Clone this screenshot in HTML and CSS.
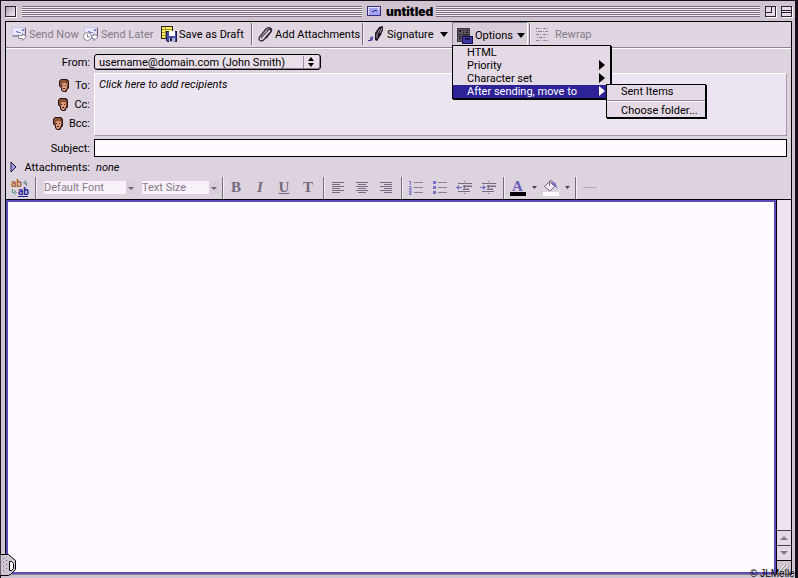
FILE: index.html
```html
<!DOCTYPE html>
<html lang="en">
<head>
    <meta charset="UTF-8">
    <meta name="viewport" content="width=device-width, initial-scale=1.0">
    <title>untitled</title>
    <link rel="stylesheet" href="styles.css">
</head>
<body>
    <!-- shapes used more than once -->
    <svg class="defs" width="0" height="0" aria-hidden="true">
        <symbol id="face" viewBox="0 0 10 13">
            <path d="M2 0h6l2 2v7l-2 2v1l-1 1H4l-2-2V9L0 7V2z" fill="#2c1418"/>
            <path d="M2 4h5l1 1v4l-2 3H4L3 10z" fill="#dc9c7c"/>
            <path d="M1 2l1-1h5l2 2v5H8V4H4L3 5v2H1z" fill="#8a5434"/>
            <path d="M3 6h1v1H3zM6 6h1v1H6zM4 9h2v1H4z" fill="#4a2020"/>
        </symbol>
        <symbol id="envelope" viewBox="0 0 14 10">
            <path d="M0 0h13v9H0z" fill="#e9e6ff" stroke="#b4aecb"/>
            <path d="M1 9h12.500V1" fill="none" stroke="#6c6688"/>
            <path d="M4 4h2v1h3v1H5V5H4zM10 2h2v2h-2z" fill="#8580d0"/>
        </symbol>
        <symbol id="lines" viewBox="0 0 14 12">
            <path d="M5 1.500h9M5 6.500h9M5 11.500h9" stroke="#8d8295"/>
        </symbol>
        <symbol id="indent" viewBox="0 0 16 14">
            <path d="M2 2.500h14M7 5h9M7 8h6M2 10.500h12" stroke="#756a7e"/>
            <path d="M7 5.500h9M7 8.500h6" stroke="#756a7e"/>
            <path d="M8.500 0v14" stroke="#756a7e" stroke-dasharray="1 1"/>
        </symbol>
    </svg>

    <div class="window">
        <header class="titlebar">
            <button class="box close" aria-label="Close"></button>
            <span class="stripes left"></span>
            <svg class="title-icon" width="14" height="10" viewBox="0 0 14 10">
                <path d="M0 0h14v10H0z" fill="#34307c"/>
                <path d="M1 1h12v8H1z" fill="#a3a1f5"/>
                <path d="M1 1h12v1H2v7H1z" fill="#e4e2ff"/>
                <path d="M5 5h2v1H5zM7 4h3v1H7z" fill="#34307c"/>
                <path d="M11 2h1v2h-1z" fill="#fff"/>
            </svg>
            <h1>untitled</h1>
            <span class="stripes right"></span>
            <button class="box zoom" aria-label="Zoom"></button>
            <button class="box shade" aria-label="Collapse"></button>
        </header>

        <main class="content">
            <div class="toolbar">
                <button class="tool send" disabled>
                    <svg width="16" height="16" viewBox="0 0 16 16">
                        <use href="#envelope" x="1" y="1" width="14" height="10"/>
                        <path d="M7.500 9.500h4v-2l4 3.500-4 3.500v-2h-4z" fill="#fff" stroke="#8d8295"/>
                    </svg>
                    Send Now
                </button>
                <button class="tool later" disabled>
                    <svg width="16" height="16" viewBox="0 0 16 16">
                        <use href="#envelope" x="1" y="1" width="14" height="10"/>
                        <path d="M9 9.500h2v-2l4 3.500-4 3.500v-2H9z" fill="#fff" stroke="#8d8295"/>
                        <circle cx="4.500" cy="10.500" r="4" fill="#fff" stroke="#8d8295"/>
                        <path d="M4.500 8v3H7" fill="none" stroke="#8d8295"/>
                    </svg>
                    Send Later
                </button>
                <button class="tool save">
                    <svg width="16" height="16" viewBox="0 0 16 16" shape-rendering="crispEdges">
                        <path d="M0 0h12v13H0z" fill="#2a2218"/>
                        <path d="M1 1h10v11H1z" fill="#fff15c"/>
                        <path d="M1 3h10v1H1zM1 6h10v1H1zM1 9h10v1H1zM4 1h1v11H4z" fill="#a8983c"/>
                        <path d="M5 5h11v11H6l-1-1z" fill="#1c1a48"/>
                        <path d="M6 6h9v9H6z" fill="#4a50a8"/>
                        <path d="M8 5h6v5H8z" fill="#fff"/>
                        <path d="M8 12h6v4H8z" fill="#b8b4cc"/>
                        <path d="M9 12h2v3H9z" fill="#1c1a48"/>
                    </svg>
                    Save as Draft
                </button>
                <span class="rule"></span>
                <button class="tool attach">
                    <svg width="16" height="16" viewBox="0 0 16 16">
                        <path d="M4 12l7-8c2-2 4 0 2.500 2L7 13.500c-2.500 3-6.500.5-4.500-2.500l6.500-8c2.500-3 7.500-.5 5 3L9 12.500" fill="none" stroke="#2c242c" stroke-width="1.200"/>
                        <path d="M4.500 11.500L10 5" stroke="#877c8c"/>
                    </svg>
                    Add Attachments
                </button>
                <span class="rule"></span>
                <button class="tool sign">
                    <svg width="17" height="16" viewBox="0 0 17 16">
                        <path d="M15 0l-4 1-4 6v7l2 1 4-6 2-5z" fill="#1c161c"/>
                        <path d="M12 3L9 8v4M14 2l-2 5" fill="none" stroke="#a59aa8"/>
                        <path d="M0 14.500h3l2-3-2-.5-.5 2.500 2.500.5" fill="none" stroke="#35309c"/>
                    </svg>
                    Signature
                    <svg class="caret" width="8" height="5" viewBox="0 0 8 5"><path d="M0 0h8L4 5z"/></svg>
                </button>
                <div class="options">
                    <button class="tool pressed" aria-haspopup="menu" aria-expanded="true">
                        <svg width="16" height="16" viewBox="0 0 16 16" shape-rendering="crispEdges">
                            <path d="M0 0h13v14H0z" fill="#3a343c"/>
                            <path d="M1 1h11v5H1zM1 7h5v6H1z" fill="#5c5460"/>
                            <path d="M2 2h2v2H2zM6 2h1v1H6zM9 2h2v1H9zM6 4h1v1H6zM9 4h2v1H9zM2 8h2v1H2zM2 10h2v1H2z" fill="#1c181c"/>
                            <path d="M5 8h11v8H5z" fill="#16124c"/>
                            <path d="M6 9h9v6H6z" fill="#3c38a0"/>
                            <path d="M8 10h5v2H8z" fill="#16124c"/>
                        </svg>
                        Options
                        <svg class="caret" width="8" height="5" viewBox="0 0 8 5"><path d="M0 0h8L4 5z"/></svg>
                    </button>
                    <div class="menu" role="menu">
                        <button role="menuitem">HTML</button>
                        <button role="menuitem" class="more">Priority</button>
                        <button role="menuitem" class="more">Character set</button>
                        <button role="menuitem" class="more selected">After sending, move to</button>
                        <div class="menu submenu" role="menu">
                            <button role="menuitem">Sent Items</button>
                            <hr>
                            <button role="menuitem">Choose folder...</button>
                        </div>
                    </div>
                </div>
                <span class="rule"></span>
                <button class="tool rewrap" disabled>
                    <svg width="14" height="14" viewBox="0 0 14 14">
                        <path d="M0 1.500h14M0 7.500h14M0 13.500h12" stroke="#8d8295" stroke-dasharray="3 1 1 2"/>
                        <path d="M0 4.500h12M1 10.500h9" stroke="#8d8295" stroke-dasharray="1 1 4 1"/>
                    </svg>
                    Rewrap
                </button>
            </div>

            <div class="headers">
                <label for="from">From:</label>
                <div class="popup">
                    <select id="from">
                        <option>username@domain.com (John Smith)</option>
                    </select>
                    <svg class="updown" width="16" height="12" viewBox="0 0 16 12">
                        <path d="M.5 0v12" stroke="#9c91a0"/>
                        <path d="M5 5l3-4 3 4zM5 7l3 4 3-4z"/>
                    </svg>
                </div>

                <div class="who">
                    <label for="recipients"><svg width="10" height="13"><use href="#face"/></svg>To:</label>
                    <label for="recipients"><svg width="10" height="13"><use href="#face"/></svg>Cc:</label>
                    <label for="recipients"><svg width="10" height="13"><use href="#face"/></svg>Bcc:</label>
                </div>
                <textarea id="recipients" placeholder="Click here to add recipients"></textarea>

                <label for="subject">Subject:</label>
                <input type="text" id="subject">
            </div>

            <div class="attachments">
                <svg width="8" height="12" viewBox="0 0 8 12"><path d="M1 1l5 5-5 5z" fill="#a5a0ec" stroke="#1c1840"/></svg>
                <span>Attachments:</span>
                <em>none</em>
            </div>

            <div class="format">
                <button class="swap" aria-label="Change case">
                    <svg width="18" height="18" viewBox="0 0 18 18">
                        <text x="0" y="8" class="ab warm">ab</text>
                        <text x="7" y="16" class="ab cool">ab</text>
                        <path d="M7 17.500h10" stroke="#221c94"/>
                        <path d="M15.500 7V3.500h-2M15 1.500l-2.500 2L15 5.500" fill="none" stroke="#6c88a0"/>
                        <path d="M1.500 10v3.500h2M3 11.500l2.500 2-2.500 2" fill="none" stroke="#4c9078"/>
                    </svg>
                </button>
                <span class="rule"></span>
                <div class="combo font">
                    <select aria-label="Font" disabled><option>Default Font</option></select>
                    <svg width="10" height="13" viewBox="0 0 10 13"><path d="M2 6h6L5 9z" fill="#6f6478"/></svg>
                </div>
                <div class="combo size">
                    <select aria-label="Text size" disabled><option>Text Size</option></select>
                    <svg width="10" height="13" viewBox="0 0 10 13"><path d="M2 6h6L5 9z" fill="#6f6478"/></svg>
                </div>
                <span class="rule"></span>
                <button class="letter bold" disabled>B</button>
                <button class="letter italic" disabled>I</button>
                <button class="letter under" disabled>U</button>
                <button class="letter" disabled>T</button>
                <span class="rule group"></span>
                <button aria-label="Align left" disabled>
                    <svg width="12" height="12" viewBox="0 0 12 12"><path d="M0 .5h12M0 2.500h8M0 4.500h12M0 6.500h8M0 8.500h12M0 10.500h8" stroke="#756a7e"/></svg>
                </button>
                <button aria-label="Align center" disabled>
                    <svg width="12" height="12" viewBox="0 0 12 12"><path d="M0 .5h12M2 2.500h8M0 4.500h12M2 6.500h8M0 8.500h12M2 10.500h8" stroke="#756a7e"/></svg>
                </button>
                <button aria-label="Align right" disabled>
                    <svg width="12" height="12" viewBox="0 0 12 12"><path d="M0 .5h12M4 2.500h8M0 4.500h12M4 6.500h8M0 8.500h12M4 10.500h8" stroke="#756a7e"/></svg>
                </button>
                <span class="rule group"></span>
                <button aria-label="Numbered list" disabled>
                    <svg width="14" height="14" viewBox="0 0 14 14">
                        <use href="#lines" width="14" height="12"/>
                        <path d="M0 .5h1.500V4M0 5.500h2v2H.5v1.500H3M0 10.500h2v3H0M0 12h2" fill="none" stroke="#7870c4"/>
                    </svg>
                </button>
                <button aria-label="Bulleted list" disabled>
                    <svg width="14" height="14" viewBox="0 0 14 14">
                        <use href="#lines" width="14" height="12"/>
                        <path d="M0 0h3v3H0zM0 5h3v3H0zM0 10h3v3H0z" fill="#7870c4"/>
                    </svg>
                </button>
                <button aria-label="Decrease indent" disabled>
                    <svg width="16" height="14" viewBox="0 0 16 14">
                        <use href="#indent" width="16" height="14"/>
                        <path d="M0 6.500L3 4v2h3v1H3v2z" fill="#7870c4"/>
                    </svg>
                </button>
                <button aria-label="Increase indent" disabled>
                    <svg width="16" height="14" viewBox="0 0 16 14">
                        <use href="#indent" width="16" height="14"/>
                        <path d="M6 6.500L3 4v2H0v1h3v2z" fill="#7870c4"/>
                    </svg>
                </button>
                <span class="rule group"></span>
                <button class="color" aria-label="Text color" disabled>
                    <svg width="28" height="18" viewBox="0 0 28 18">
                        <text x="2" y="12" class="color-a">A</text>
                        <path d="M0 13h16v4H0z"/>
                        <path d="M22 7h5l-2.500 3z" fill="#4c4254"/>
                    </svg>
                </button>
                <button class="color" aria-label="Background color" disabled>
                    <svg width="28" height="18" viewBox="0 0 28 18">
                        <path d="M1.500 7.500l5-5 5 5-4.500 4.500z" fill="#f4eefa" stroke="#756a7e"/>
                        <path d="M6.500 7V2q1.500-2 3 1" fill="none" stroke="#756a7e"/>
                        <path d="M8 3c4-1 6 2 6 8-1-3-2-4-3-4z" fill="#7870c4"/>
                        <path d="M0 13h16v4H0z" fill="#fffaff"/>
                        <path d="M22 7h5l-2.500 3z" fill="#4c4254"/>
                    </svg>
                </button>
                <span class="rule group"></span>
                <button aria-label="Horizontal line" disabled>
                    <svg width="14" height="2" viewBox="0 0 14 2"><path d="M0 .5h14" stroke="#b3a8b8"/></svg>
                </button>
            </div>

            <div class="body-row">
                <textarea class="editor" aria-label="Message"></textarea>
                <div class="scrollbar">
                    <button aria-label="Scroll up"><svg width="8" height="4" viewBox="0 0 8 4"><path d="M0 4h8L4 0z" fill="#887d8c"/></svg></button>
                    <button aria-label="Scroll down"><svg width="8" height="4" viewBox="0 0 8 4"><path d="M0 0h8L4 4z" fill="#887d8c"/></svg></button>
                    <div class="grip">
                        <svg width="14" height="12" viewBox="0 0 14 12">
                            <path d="M2 10l6-6M5 11l6-6M8 12l4-4" stroke="#fff"/>
                            <path d="M3 10l6-6M6 11l6-6" stroke="#8d8295"/>
                        </svg>
                    </div>
                </div>
            </div>
        </main>

        <svg class="handle" width="16" height="22" viewBox="0 0 16 22">
            <path d="M0 .5h8.500l7 6v9l-5 5-2 1H0z" fill="#cfc4cf" stroke="#000"/>
            <path d="M3.500 4v14M6.500 6v12" stroke="#756a7e" stroke-dasharray="1 3"/>
            <path d="M9.500 7.500h2l2 2v5l-2 2h-2z" fill="#fff" stroke="#000"/>
        </svg>
        <span class="credit">© JLMeller</span>
    </div>
</body>
</html>
```
FILE: styles.css
```css
* {
    box-sizing: border-box;
}

body {
    margin: 0;
    height: 100vh;
    overflow: hidden;
    font-family: Roboto, "Liberation Sans", sans-serif;
    font-size: 11px;
    line-height: 13px;
    color: #000;
}

button, select, input, textarea {
    font: inherit;
    color: inherit;
    margin: 0;
    padding: 0;
    border: 0;
    border-radius: 0;
    background: none;
    outline: 0;
}

svg {
    display: block;
    flex: none;
    overflow: visible;
}

.defs {
    position: absolute;
}

.window {
    position: relative;
    height: 100%;
    display: flex;
    flex-direction: column;
    padding: 0 3px 3px 4px;
    background: #cfc4cf;
    border: 1px solid #181018;
    border-right-width: 3px;
    border-bottom: 0;
}

/* title bar */
.titlebar {
    display: flex;
    align-items: center;
    height: 20px;
    flex: none;
}

.titlebar h1 {
    margin: 0 3px 0 5px;
    font-family: Inter, sans-serif;
    font-size: 12px;
    font-weight: 900;
}

.title-icon {
    margin-left: 5px;
}

.stripes {
    height: 11px;
    background: repeating-linear-gradient(#7d727f 0 1px, #f2e9f3 1px 2px);
}

.left {
    flex: 21;
}

.right {
    flex: 20;
}

.box {
    width: 11px;
    height: 11px;
    border: 1px solid #2c242c;
    background: linear-gradient(135deg, #a89dab, #f4edf5);
    box-shadow: 1px 1px #fff;
}

.close {
    margin-right: 6px;
}

.zoom {
    margin-left: 5px;
    background: linear-gradient(#2c242c, #2c242c) 0 5px / 6px 1px no-repeat,
        linear-gradient(#2c242c, #2c242c) 5px 0 / 1px 6px no-repeat, #e4dae5;
}

.shade {
    margin-left: 5px;
    background: linear-gradient(#e4dae5 3px, #2c242c 3px 4px, #e4dae5 4px 5px, #2c242c 5px 6px, #e4dae5 6px);
}

.content {
    flex: 1;
    min-height: 0;
    display: flex;
    flex-direction: column;
    background: #ddd3df;
    border: 1px solid #000;
    border-bottom-color: #8d8295;
}

.rule {
    width: 2px;
    height: 22px;
    border-left: 1px solid #756a7e;
    border-right: 1px solid #f6eff7;
    flex: none;
}

/* toolbar */
.toolbar {
    display: flex;
    align-items: center;
    height: 27px;
    flex: none;
    padding: 0 0 2px 5px;
    background: #e0d6e1;
    border-bottom: 1px solid #fff;
    box-shadow: inset 0 -1px #8d8295;
}

.tool {
    display: flex;
    align-items: center;
    gap: 2px;
    height: 24px;
    white-space: nowrap;
}

.tool:disabled {
    color: #857a89;
}

.send {
    width: 72px;
}

.later {
    width: 78px;
}

.save {
    width: 90px;
}

.attach {
    width: 109px;
    padding-left: 4px;
}

.sign {
    width: 88px;
    padding-left: 4px;
}

.caret {
    margin-left: auto;
}

.sign .caret {
    margin-right: 4px;
}

.rewrap {
    gap: 5px;
    padding-left: 5px;
}

.options {
    position: relative;
    margin-right: 1px;
}

.pressed {
    width: 76px;
    padding: 3px 2px 0 4px;
    background: #d8cdda;
    border: 1px solid #8d8295;
    border-right-color: #fff;
}

/* menus */
.menu {
    position: absolute;
    z-index: 2;
    top: 23px;
    left: 0;
    width: 159px;
    background: #e4dae5;
    border: 1px solid #000;
    box-shadow: 1px 1px #000;
}

.menu button {
    position: relative;
    display: block;
    width: 100%;
    height: 13px;
    padding-left: 14px;
    text-align: left;
    white-space: nowrap;
}

.more::after {
    content: "";
    position: absolute;
    right: 5px;
    top: 1px;
    border-left: 6px solid #000;
    border-top: 5px solid transparent;
    border-bottom: 5px solid transparent;
}

.menu .selected {
    color: #fff;
    background: #2e2299;
}

.selected::after {
    border-left-color: #fff;
}

.submenu {
    top: 38px;
    left: 153px;
    width: 100px;
}

.submenu hr {
    margin: 2px 0;
    border: 0;
    border-top: 1px solid #8d8295;
    border-bottom: 1px solid #fff;
}

/* address fields */
.headers {
    display: grid;
    grid-template-columns: 84px 1fr;
    column-gap: 4px;
    align-items: center;
    padding: 5px 4px 0 0;
}

.headers label {
    text-align: right;
}

.popup {
    position: relative;
    width: 227px;
}

.popup select {
    display: block;
    appearance: none;
    width: 100%;
    height: 16px;
    padding-left: 4px;
    background: #e8dfe9;
    border: 1px solid #000;
    border-radius: 3px;
    box-shadow: inset -1px -1px #8d8295;
}

.updown {
    position: absolute;
    right: 2px;
    top: 2px;
}

.who label {
    display: flex;
    align-items: center;
    justify-content: flex-end;
    gap: 6px;
    height: 19px;
}

#recipients {
    height: 63px;
    width: 100%;
    margin: 3px 0;
    padding: 4px;
    resize: none;
    background: #ede4f2;
    border: 1px solid #fff;
    border-right-color: #a398a8;
    border-bottom-color: #a398a8;
}

#recipients::placeholder {
    color: #000;
    font-style: italic;
}

#subject {
    height: 18px;
    width: 100%;
    padding: 0 4px;
    background: #fffaff;
    border: 1px solid #000;
}

.attachments {
    display: flex;
    align-items: center;
    height: 20px;
    padding-left: 4px;
}

.attachments span {
    width: 72px;
    text-align: right;
}

.attachments em {
    margin-left: 6px;
}

/* formatting bar */
.format {
    display: flex;
    align-items: center;
    height: 22px;
    flex: none;
    padding: 0 0 1px 5px;
}

.format button {
    display: flex;
    align-items: center;
    justify-content: center;
    width: 24px;
    height: 20px;
    flex: none;
}

.format .swap {
    justify-content: flex-start;
}

.ab {
    font-size: 10px;
    font-weight: bold;
}

.warm {
    fill: #a8602c;
}

.cool {
    fill: #221c94;
}

.group {
    margin: 0 1px 0 3px;
}

.combo {
    position: relative;
}

.combo select {
    display: block;
    appearance: none;
    width: 100%;
    height: 13px;
    background: #f8f1fa;
    color: #857a89;
    opacity: 1;
}

.combo svg {
    position: absolute;
    right: 0;
    top: 0;
    background: #d8cdda;
}

.font {
    width: 92px;
    margin: 0 6px 0 7px;
}

.size {
    width: 77px;
    margin-right: 3px;
}

.format .letter {
    font-family: "Liberation Serif", serif;
    font-size: 15px;
    font-weight: bold;
    color: #756a7e;
}

.format .italic {
    font-style: italic;
}

.under {
    text-decoration: underline;
}

.format .color {
    width: 33px;
    justify-content: flex-start;
    padding-left: 4px;
}

.color-a {
    font-family: "Liberation Serif", serif;
    font-size: 15px;
    font-weight: bold;
    fill: #6860b8;
}

/* message and scrollbar */
.body-row {
    flex: 1;
    min-height: 0;
    display: flex;
    border-top: 1px solid #000;
}

.editor {
    flex: 1;
    resize: none;
    background: #fffaff;
    border: 2px solid #5b4fb5;
    padding: 4px;
}

.scrollbar {
    width: 15px;
    display: flex;
    flex-direction: column;
    justify-content: flex-end;
    background: #ede4f0;
    border-left: 1px solid #000;
}

.scrollbar button {
    display: flex;
    align-items: center;
    justify-content: center;
    height: 15px;
    background: #e4dae5;
    border-top: 1px solid #4c4254;
}

.grip {
    height: 14px;
    background: #cfc4cf;
    border-top: 1px solid #000;
}

.handle {
    position: absolute;
    left: -1px;
    bottom: 2px;
}

.credit {
    position: absolute;
    right: -3px;
    bottom: -2px;
    font-family: "Liberation Sans", sans-serif;
    font-size: 10px;
}
```
